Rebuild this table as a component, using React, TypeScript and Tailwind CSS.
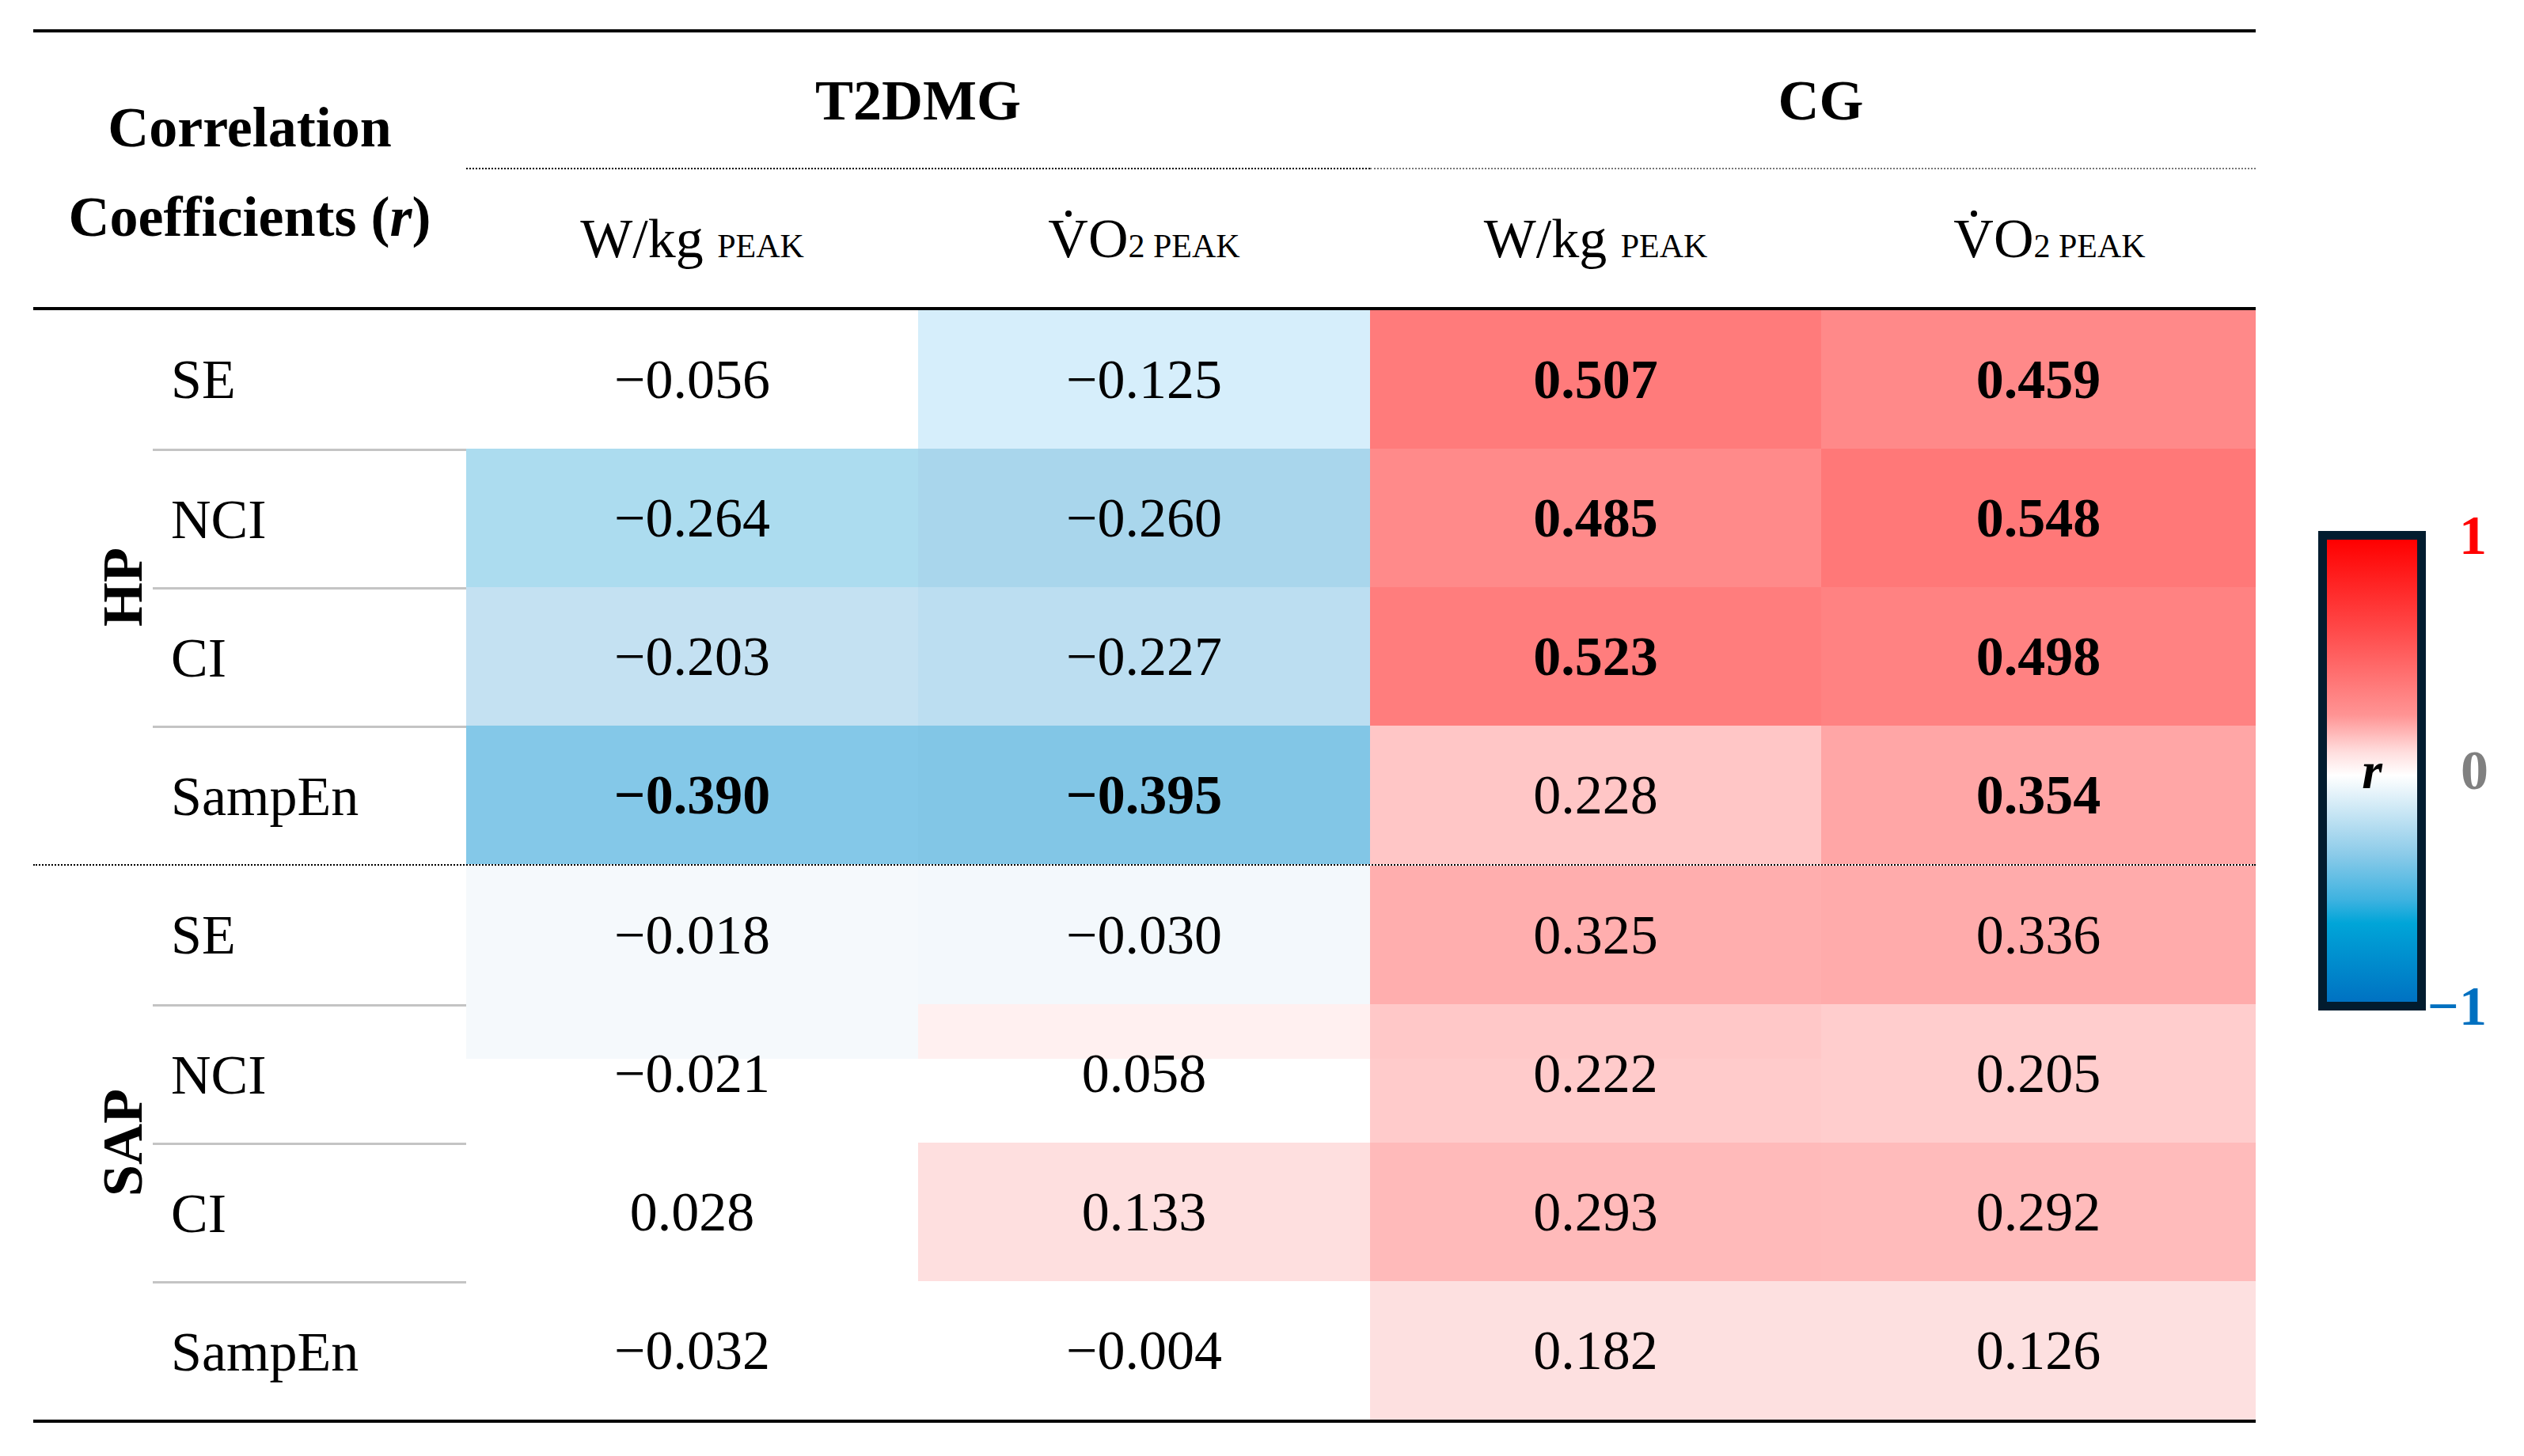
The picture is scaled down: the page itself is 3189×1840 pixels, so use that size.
type Cell = { v: string; bg: string; b?: boolean };
type Row = { label: string; cells: Cell[] };

const HP: Row[] = [
  {
    label: "SE",
    cells: [
      { v: "−0.056", bg: "bg-white" },
      { v: "−0.125", bg: "bg-[#d6eefb]" },
      { v: "0.507", bg: "bg-[#ff7b7b]", b: true },
      { v: "0.459", bg: "bg-[#ff8989]", b: true },
    ],
  },
  {
    label: "NCI",
    cells: [
      { v: "−0.264", bg: "bg-[#acdcef]" },
      { v: "−0.260", bg: "bg-[#a9d6ec]" },
      { v: "0.485", bg: "bg-[#ff8a8a]", b: true },
      { v: "0.548", bg: "bg-[#ff7878]", b: true },
    ],
  },
  {
    label: "CI",
    cells: [
      { v: "−0.203", bg: "bg-[#c4e1f2]" },
      { v: "−0.227", bg: "bg-[#bcdef1]" },
      { v: "0.523", bg: "bg-[#ff7d7d]", b: true },
      { v: "0.498", bg: "bg-[#ff8282]", b: true },
    ],
  },
  {
    label: "SampEn",
    cells: [
      { v: "−0.390", bg: "bg-[#84c8e8]", b: true },
      { v: "−0.395", bg: "bg-[#82c6e6]", b: true },
      { v: "0.228", bg: "bg-[#ffc6c6]" },
      { v: "0.354", bg: "bg-[#ffa6a6]", b: true },
    ],
  },
];

const SAP: Row[] = [
  {
    label: "SE",
    cells: [
      { v: "−0.018", bg: "bg-[#f5f9fc]" },
      { v: "−0.030", bg: "bg-[#f3f8fc]" },
      { v: "0.325", bg: "bg-[#ffaeae]" },
      { v: "0.336", bg: "bg-[#ffabab]" },
    ],
  },
  {
    label: "NCI",
    cells: [
      { v: "−0.021", bg: "bg-[linear-gradient(to_bottom,#f5f9fc_69px,#ffffff_69px)]" },
      { v: "0.058", bg: "bg-[linear-gradient(to_bottom,#fff0f0_69px,#ffffff_69px)]" },
      { v: "0.222", bg: "bg-[linear-gradient(to_bottom,#ffc8c8_69px,#ffcbcb_69px)]" },
      { v: "0.205", bg: "bg-[#ffcdcd]" },
    ],
  },
  {
    label: "CI",
    cells: [
      { v: "0.028", bg: "bg-white" },
      { v: "0.133", bg: "bg-[#fedfdf]" },
      { v: "0.293", bg: "bg-[#ffbaba]" },
      { v: "0.292", bg: "bg-[#ffbbbb]" },
    ],
  },
  {
    label: "SampEn",
    cells: [
      { v: "−0.032", bg: "bg-white" },
      { v: "−0.004", bg: "bg-white" },
      { v: "0.182", bg: "bg-[#fde0e0]" },
      { v: "0.126", bg: "bg-[#fde0e0]" },
    ],
  },
];

const COLS = ["w-[571px]", "w-[571px]", "w-[570px]", "w-[549px]"];

function VO2() {
  return (
    <span className="whitespace-nowrap">
      <span className="relative">
        V
        <span className="absolute left-1/2 top-[3px] h-[8px] w-[8px] -translate-x-1/2 rounded-full bg-black" />
      </span>
      O<span className="text-[42px]">2 PEAK</span>
    </span>
  );
}

function WKg() {
  return (
    <span className="whitespace-nowrap">
      W/kg <span className="text-[42px]">PEAK</span>
    </span>
  );
}

function Group({ name, rows }: { name: string; rows: Row[] }) {
  return (
    <div className="flex">
      <div className="flex w-[151px] items-center justify-end pr-[2px]">
        <span className="rotate-180 text-[72px] font-bold leading-none [writing-mode:vertical-rl]">{name}</span>
      </div>
      <div className="flex flex-col">
        {rows.map((r, i) => (
          <div key={r.label} className="flex h-[175px]">
            <div
              className={`flex w-[396px] items-center pl-[23px] ${i > 0 ? "border-t-[3px] border-[#c4c4c4]" : ""}`}
            >
              {r.label}
            </div>
            {r.cells.map((c, j) => (
              <div
                key={j}
                className={`flex items-center justify-center ${COLS[j]} ${c.bg} ${c.b ? "font-bold" : ""}`}
              >
                {c.v}
              </div>
            ))}
          </div>
        ))}
      </div>
    </div>
  );
}

export default function App() {
  return (
    <div className="h-[1840px] w-[3189px] bg-white font-['Liberation_Serif',serif] text-[70px] text-black">
      <div className="flex pl-[42px] pt-[37px]">
        <div className="w-[2808px] border-y-4 border-black">
          {/* header */}
          <div className="flex h-[351px] border-b-4 border-black">
            <div className="flex w-[547px] flex-col items-center justify-center pt-[6px] text-[72px] font-bold leading-[113px]">
              <span>Correlation</span>
              <span>
                Coefficients (<i>r</i>)
              </span>
            </div>
            <div className="flex flex-1 flex-col">
              <div className="flex h-[171px] text-[72px] font-bold">
                <div className="flex w-[1142px] items-center justify-center">T2DMG</div>
                <div className="flex flex-1 items-center justify-center pl-[20px]">CG</div>
              </div>
              <div className="flex">
                <div className="w-[1142px] border-t-2 border-dotted border-black" />
                <div className="flex-1 border-t-2 border-dotted border-[#777]" />
              </div>
              <div className="flex flex-1">
                <div className={`flex items-center justify-center ${COLS[0]}`}>
                  <WKg />
                </div>
                <div className={`flex items-center justify-center ${COLS[1]}`}>
                  <VO2 />
                </div>
                <div className={`flex items-center justify-center ${COLS[2]}`}>
                  <WKg />
                </div>
                <div className={`flex items-center justify-center pl-[28px] ${COLS[3]}`}>
                  <VO2 />
                </div>
              </div>
            </div>
          </div>

          <Group name="HP" rows={HP} />
          <div className="border-t-2 border-dotted border-black" />
          <Group name="SAP" rows={SAP} />
        </div>

        {/* colour scale */}
        <div className="relative ml-[79px] mt-[634px] h-[606px] w-[136px] self-start">
          <div className="flex h-full w-full items-center justify-center border-[11px] border-[#021c2f] bg-[linear-gradient(to_bottom,#ff0000_0%,#ff4b4b_20%,#ff9494_38%,#ffdede_46%,#ffffff_51%,#d6ecf7_57%,#8ccbe9_68%,#3db2e0_78%,#00a5d8_83%,#0072c2_100%)]">
            <span className="text-[66px] font-bold italic leading-none">r</span>
          </div>
          <span className="absolute left-[178px] top-[-29px] text-[70px] font-bold leading-none text-[#ff0000]">1</span>
          <span className="absolute left-[180px] top-[268px] text-[70px] font-bold leading-none text-[#808080]">0</span>
          <span className="absolute left-[138px] top-[566px] text-[70px] font-bold leading-none text-[#0070c0]">−1</span>
        </div>
      </div>
    </div>
  );
}
